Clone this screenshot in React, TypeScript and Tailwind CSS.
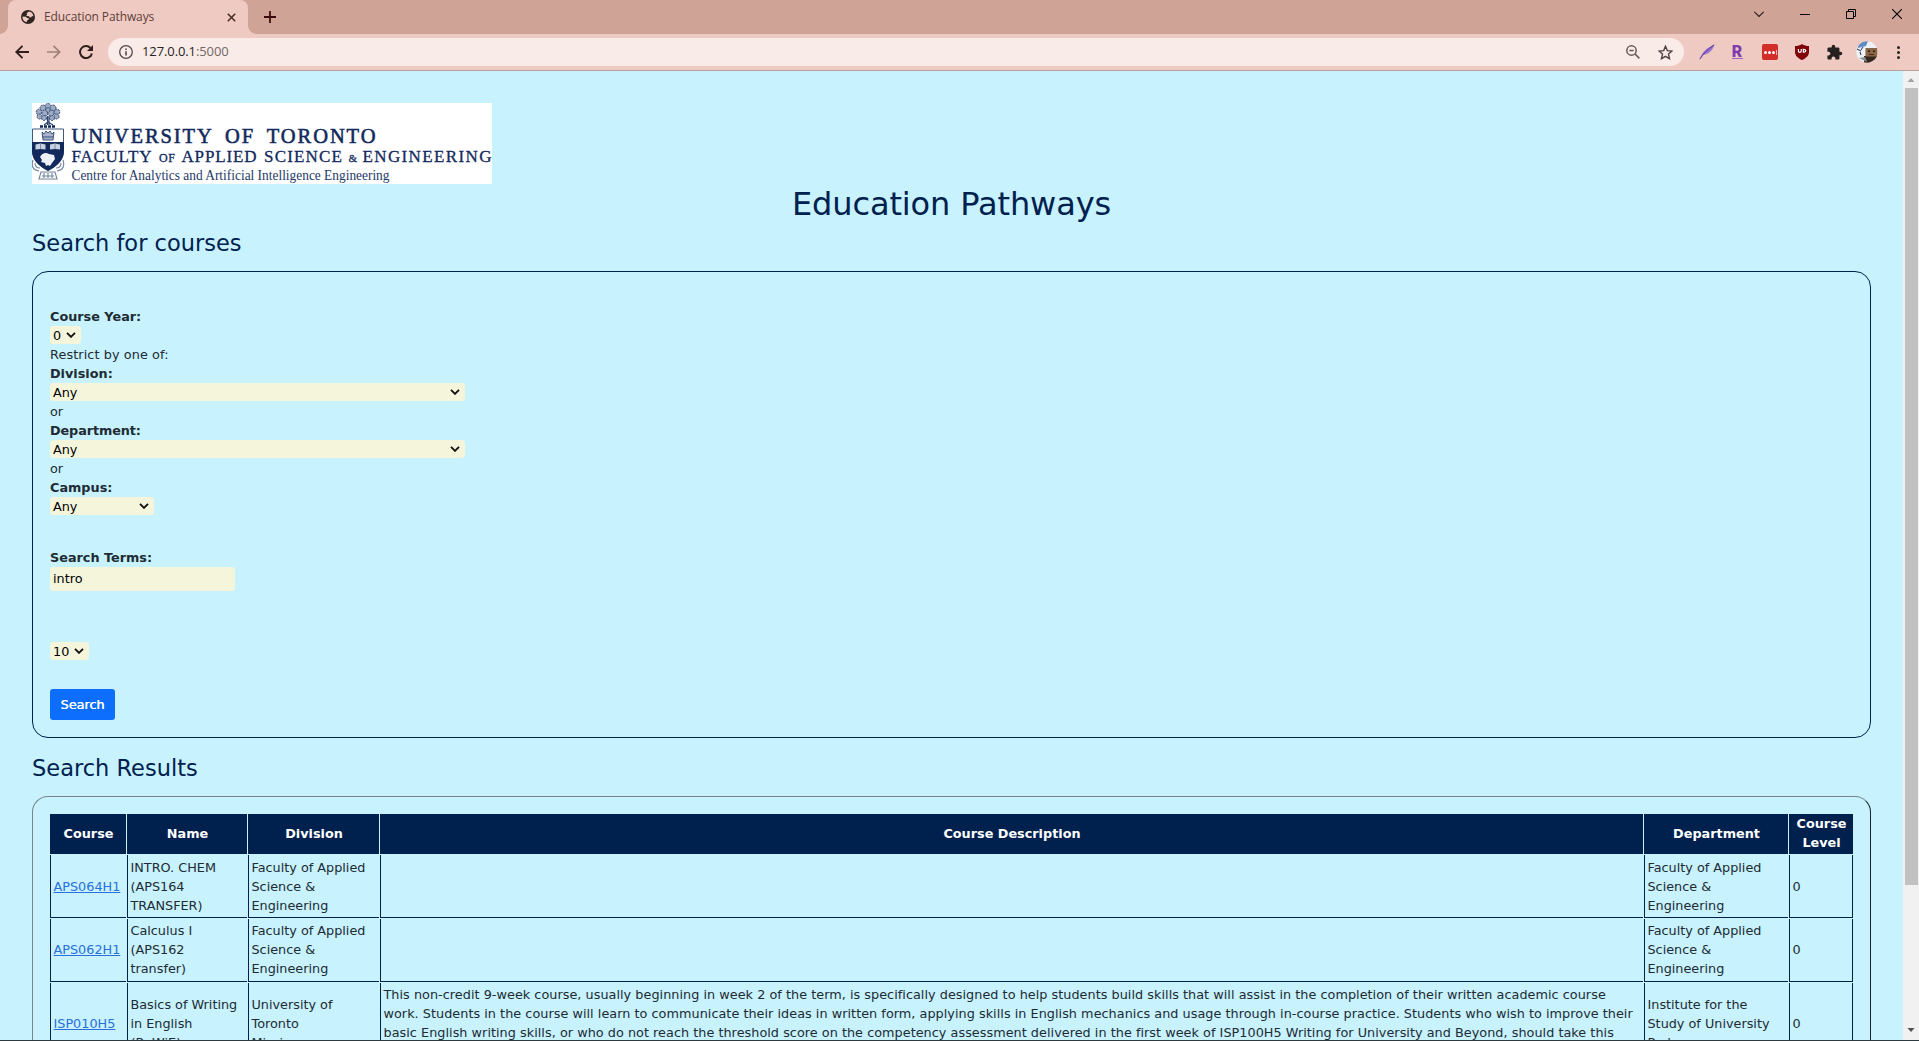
import React from "react";
import { MdExtension } from "react-icons/md";

function TabStrip() {
  return (
    <div className="flex h-[34px] bg-[#cfa497] pl-2">
      <div className="relative flex h-[34px] w-[240px] items-center rounded-t-lg bg-[#efcac2] pl-[13px] pr-[12px]">
        <span className="absolute -left-2 bottom-0 h-2 w-2 bg-[radial-gradient(circle_at_0_0,#cfa497_7.5px,#efcac2_8px)]" />
        <span className="absolute -right-2 bottom-0 h-2 w-2 bg-[radial-gradient(circle_at_100%_0,#cfa497_7.5px,#efcac2_8px)]" />
        <svg className="h-[14px] w-[14px]" viewBox="0 0 14 14">
          <circle cx="7" cy="7" r="7" fill="#2f2321" />
          <path d="M8 1.600 5.600 3.200l.5 1.500-1 1.300 3 .3.600 1.300 1.500-.3.900-1.200 1.300.3A5.600 5.600 0 0 0 8 1.600zM1.500 6.600l3.300.2 1.400 1.200 1.600.2-.3 1.600-1.500.7-.3 1.800A5.700 5.700 0 0 1 1.500 6.600z" fill="#efcac2" />
        </svg>
        <span className="ml-[9px] flex-1 whitespace-nowrap font-['Open_Sans','Noto_Sans',sans-serif] text-[12px] tracking-[-0.1px] text-[#5f4039]">Education Pathways</span>
        <svg className="h-[9px] w-[9px]" viewBox="0 0 9 9" stroke="#4a2f2a" strokeWidth="1.6">
          <path d="M.8.8l7.400 7.400M8.200.8.8 8.200" />
        </svg>
      </div>
      <svg className="ml-4 mt-[11px] h-3 w-3" viewBox="0 0 12 12" stroke="#3c0a0a" strokeWidth="1.8">
        <path d="M6 0v12M0 6h12" />
      </svg>
      <div className="ml-auto flex items-start pr-[17px] pt-[9px]">
        <svg className="mr-[36px] mt-[2px] h-[7px] w-[10px]" viewBox="0 0 10 7" fill="none" stroke="#2b1a17" strokeWidth="1.100">
          <path d="M.3.8 5 5.500 9.700.8" />
        </svg>
        <svg className="mr-[36px] h-[10px] w-[10px]" viewBox="0 0 10 10" stroke="#000">
          <path d="M0 5.500h10" />
        </svg>
        <svg className="mr-[36px] h-[10px] w-[10px]" viewBox="0 0 10 10" fill="none" stroke="#000">
          <path d="M.5 2.500h7v7h-7zM2.500 2.500v-2h7v7h-2" />
        </svg>
        <svg className="h-[10px] w-[10px]" viewBox="0 0 10 10" stroke="#000" strokeWidth="1.100">
          <path d="M0 0l10 10M10 0 0 10" />
        </svg>
      </div>
    </div>
  );
}

function Toolbar() {
  return (
    <div className="flex h-[37px] items-center border-b border-[#b9a19d] bg-[#efcac2] pl-[15px] pr-[16px]">
      <svg className="h-[14px] w-[14px]" viewBox="0 0 14 14" fill="none" stroke="#2f1f1c" strokeWidth="1.900">
        <path d="M14 7H1.500M7.500.8 1.300 7l6.200 6.200" />
      </svg>
      <svg className="ml-[18px] h-[14px] w-[14px]" viewBox="0 0 14 14" fill="none" stroke="#a17f79" strokeWidth="1.700">
        <path d="M0 7h12.500M6.500.8 12.700 7l-6.200 6.200" />
      </svg>
      <svg className="ml-[18px] h-[14px] w-[14px]" viewBox="0 0 14 14" fill="none">
        <path d="M12.900 8.500A6 6 0 1 1 11.500 3" stroke="#2f1f1c" strokeWidth="2" />
        <path d="M14 0v6H8z" fill="#2f1f1c" />
      </svg>
      <div className="ml-[15px] flex h-7 w-[1576px] items-center rounded-full bg-[#f9ebe8] pl-[11px] pr-[11px]">
        <svg className="h-[14px] w-[14px]" viewBox="0 0 14 14" fill="none" stroke="#57494a" strokeWidth="1.300">
          <circle cx="7" cy="7" r="6.300" />
          <path d="M7 6.200v4.300M7 3.400v1.500" strokeWidth="1.600" />
        </svg>
        <span className="ml-[9px] flex-1 font-['Open_Sans','Noto_Sans',sans-serif] text-[13px] tracking-[-0.100px] text-[#2a2222]">
          127.0.0.1<span className="text-[#756765]">:5000</span>
        </span>
        <svg className="h-[14px] w-[14px]" viewBox="0 0 14 14" fill="none" stroke="#6a5b58" strokeWidth="1.500">
          <circle cx="5.500" cy="5.500" r="4.700" />
          <path d="M8.900 8.900l4.500 4.500M3.300 5.500h4.400" />
        </svg>
        <svg className="ml-[18px] h-[15px] w-[15px]" viewBox="0 0 15 15" fill="none" stroke="#4e4240" strokeWidth="1.400">
          <path d="M7.500 1.200 9.300 5.600l4.700.4-3.500 3.100 1 4.600-4-2.400-4 2.400 1-4.600L1 6l4.700-.4z" />
        </svg>
      </div>
      <svg className="ml-[15px] h-4 w-4" viewBox="0 0 16 16">
        <path d="M.8 15C3 8 8 3.500 15.500.8 13.500 6.500 10 10.300 4 11z" fill="#9a75cf" />
        <path d="M.8 15.200C4 10 9 5 15.200.8" stroke="#5b3295" fill="none" />
      </svg>
      <div className="ml-[14px] flex h-[18px] w-[16px] flex-col items-center justify-center font-['Roboto','Open_Sans',sans-serif] text-[16px] font-black leading-[13px] text-[#7e3bb0]">
        <span>R</span>
        <span className="h-[1px] w-[11px] bg-[#9a68c5]" />
      </div>
      <div className="ml-[17px] flex h-4 w-4 items-center justify-center gap-[1px] rounded-[2px] bg-[#d32d2a]">
        <i className="h-[3px] w-[3px] rounded-full bg-white" />
        <i className="h-[3px] w-[3px] rounded-full bg-white" />
        <i className="h-[3px] w-[3px] rounded-full bg-white" />
        <i className="h-[5px] w-[1px] bg-[#f3b5b3]" />
      </div>
      <svg className="ml-[17px] h-4 w-[14px]" viewBox="0 0 14 16">
        <path d="M7 0c2 1.500 4.500 2 7 2v6c0 4-3.500 6.500-7 8-3.500-1.500-7-4-7-8V2c2.500 0 5-.5 7-2z" fill="#800309" />
        <path d="M3.400 5v2a1.400 1.400 0 0 0 2.800 0V5M8.300 5.300v2.900c3.300.3 3.300-3.200 0-2.900z" fill="none" stroke="#fff" strokeWidth="1.200" />
      </svg>
      <MdExtension className="ml-[17px] h-[17px] w-[17px] text-[#262120]" />
      <svg className="ml-[13px] h-[22px] w-[22px]" viewBox="0 0 22 22">
        <clipPath id="avatar"><circle cx="11" cy="11" r="10.700" /></clipPath>
        <g clipPath="url(#avatar)">
          <path d="M0 0h22v22H0z" fill="#eef1f6" />
          <path d="M2 0h10L10 5 2 7z" fill="#5f8cc5" />
          <path d="M1 8l4 2M5 9l2-3M4 11l1 3" stroke="#1d2c5c" fill="none" />
          <path d="M8 15h14v7H8z" fill="#35291f" />
          <path d="M3 17l6-1 2 5z" fill="#8c8f96" />
          <path d="M9.500 7h12v8.500h-12z" fill="#8a6545" />
          <path d="M12 9.500h2v1.500h-2zM17 9.500h2v1.500h-2zM13 13h5v.8h-5z" fill="#2b1d14" />
        </g>
      </svg>
      <div className="ml-auto flex w-[10px] flex-col items-center gap-[2px]">
        <i className="h-[3px] w-[3px] rounded-full bg-[#2c2422]" />
        <i className="h-[3px] w-[3px] rounded-full bg-[#2c2422]" />
        <i className="h-[3px] w-[3px] rounded-full bg-[#2c2422]" />
      </div>
    </div>
  );
}

function Logo() {
  return (
    <svg className="block h-[81px] w-[460px] bg-white" viewBox="0 0 460 81" fontFamily="'Liberation Serif', serif" fill="#12295c">
      <g stroke="#2b4473" fill="none" strokeWidth=".9">
        <g fill="#9eabc3" strokeDasharray="2 .8">
          <circle cx="16" cy="3.500" r="3" /><circle cx="11" cy="5" r="3" /><circle cx="21" cy="5" r="3" />
          <circle cx="7" cy="9" r="2.800" /><circle cx="25" cy="9" r="2.800" /><circle cx="7.500" cy="13.500" r="2.500" />
          <circle cx="24.500" cy="13.500" r="2.500" /><circle cx="13" cy="10" r="3" /><circle cx="19" cy="10" r="3" />
          <circle cx="16" cy="7" r="2.200" /><circle cx="12" cy="15" r="2.500" /><circle cx="20" cy="15" r="2.500" />
        </g>
        <path d="M15.500 13v9M17 13v9M12 22l4-3 5 3" strokeWidth="1.200" />
        <path d="M8 23.500h16" strokeWidth="2.500" stroke="#12295c" strokeDasharray="3 1" />
        <path d="M.5 26h31v22c0 9-7 15-15.500 19C7.500 63 .5 57 .5 48z" fill="#fff" />
        <path d="M10 29l2 2 2-3 2 2 2-2 2 3 2-2-1 8H11zM11 34h10" fill="#a9b4ca" />
      </g>
      <path d="M0 39h32v9c0 9-7 15.500-16 20C7 63.500 0 57 0 48z" />
      <g fill="#c9d1df">
        <path d="M3.500 41.500l5-1 5 1v5l-5-.5-5 .5zM18 41.500l5-1 5 1v5l-5-.5-5 .5z" />
        <path d="M8 54c2-4 6-5 9-3l5 1 1 4-3 4-2 3-2-1-2 1-1-3-4-1 1-2z" fill="#eef1f6" />
      </g>
      <path d="M8.500 41v5M23 41v5" stroke="#5e7196" strokeWidth=".7" />
      <path d="M1 57c-2 6 0 10 6 11M31 57c2 6 0 10-6 11M3 60c0 3 2 5 5 5M29 60c0 3-2 5-5 5M9 69h14l2 7H7zM10 73h12M12 70v5M16 70v5M20 70v5" fill="none" stroke="#70819f" strokeWidth="1.100" />
      <text x="39.500" y="39.500" fontSize="20.500" textLength="304" stroke="#12295c" strokeWidth=".55" wordSpacing="5">UNIVERSITY OF TORONTO</text>
      <g fontSize="17" stroke="#12295c" strokeWidth=".3">
        <text x="39.500" y="58.500" textLength="80">FACULTY</text>
        <text x="127" y="58.500" fontSize="12" textLength="16">OF</text>
        <text x="149.500" y="58.500" textLength="75">APPLIED</text>
        <text x="232" y="58.500" textLength="78">SCIENCE</text>
        <text x="316.500" y="58.500" fontSize="11">&amp;</text>
        <text x="330.500" y="58.500" textLength="129">ENGINEERING</text>
      </g>
      <text x="39.500" y="77" fontSize="14" textLength="318" lengthAdjust="spacingAndGlyphs" fill="#243a69">Centre for Analytics and Artificial Intelligence Engineering</text>
    </svg>
  );
}

function Select({ value, className }: { value: string; className: string }) {
  return (
    <div className="flex h-[19px] items-start">
      <div className={"flex h-[18px] items-center justify-between rounded-[3px] bg-[#f5f5dc] pl-[4px] pr-[5px] leading-[18px] text-black " + className}>
        <span className="-ml-px pt-px">{value}</span>
        <svg className="h-[6px] w-[10px]" viewBox="0 0 10 6" fill="none" stroke="#111" strokeWidth="1.900">
          <path d="M1 .8 5 4.800l4-4" />
        </svg>
      </div>
    </div>
  );
}

function SearchForm() {
  return (
    <div className="h-[467px] rounded-[16px] border border-[#00204e] px-[17px] pt-[35px]">
      <b className="block">Course Year:</b>
      <Select value="0" className="w-[31px]" />
      <p className="tracking-[0.1px]">Restrict by one of:</p>
      <b className="block">Division:</b>
      <Select value="Any" className="w-[415px]" />
      <p>or</p>
      <b className="block tracking-[-0.1px]">Department:</b>
      <Select value="Any" className="w-[415px]" />
      <p>or</p>
      <b className="block">Campus:</b>
      <Select value="Any" className="w-[104px]" />
      <b className="mt-[32px] block">Search Terms:</b>
      <div className="h-6 w-[185px] rounded-[3px] bg-[#f5f5dc] pl-[3px] leading-[23px] text-black">intro</div>
      <div className="mt-[51px]">
        <Select value="10" className="w-[39px]" />
      </div>
      <button className="mt-[28px] block h-[31px] w-[65px] rounded-[3px] bg-[#0d6efd] text-[12.800px] text-white [text-shadow:0.300px_0_0_#fff]">Search</button>
    </div>
  );
}

const headers = ["Course", "Name", "Division", "Course Description", "Department", "Course Level"];

const rows = [
  { h: "h-[63px]", pad: "", cells: [["APS064H1"], ["INTRO. CHEM", "(APS164", "TRANSFER)"], ["Faculty of Applied", "Science &", "Engineering"], [], ["Faculty of Applied", "Science &", "Engineering"], ["0"]] },
  { h: "h-[63px]", pad: "pb-[2px]", cells: [["APS062H1"], ["Calculus I", "(APS162", "transfer)"], ["Faculty of Applied", "Science &", "Engineering"], [], ["Faculty of Applied", "Science &", "Engineering"], ["0"]] },
  {
    h: "h-[82px]",
    pad: "",
    cells: [
      ["ISP010H5"],
      ["Basics of Writing", "in English", "(BaWiE)"],
      ["University of", "Toronto", "Mississauga"],
      [
        "This non-credit 9-week course, usually beginning in week 2 of the term, is specifically designed to help students build skills that will assist in the completion of their written academic course",
        "work. Students in the course will learn to communicate their ideas in written form, applying skills in English mechanics and usage through in-course practice. Students who wish to improve their",
        "basic English writing skills, or who do not reach the threshold score on the competency assessment delivered in the first week of ISP100H5 Writing for University and Beyond, should take this",
        "course.",
      ],
      ["Institute for the", "Study of University", "Pedagogy"],
      ["0"],
    ],
  },
];

const columns = "grid grid-cols-[76px_120px_131px_1263px_144px_64px] gap-x-px";

function Results() {
  return (
    <div className="h-[400px] rounded-[16px] border border-l-[#76848f] border-t-[#76848f] border-r-[#14252d] border-b-[#14252d] px-[17px] pt-[17px]">
      <div className={columns + " h-10"}>
        {headers.map((h) => (
          <div key={h} className="flex items-center justify-center bg-[#00204e] pb-[2px] pl-[9px] pr-2 text-center font-bold text-white">{h}</div>
        ))}
      </div>
      {rows.map((r, i) => (
        <div key={i} className={columns + " mt-px " + r.h}>
          {r.cells.map((lines, c) => (
            <div
              key={c}
              className={
                "flex flex-col justify-center whitespace-nowrap border-b border-l border-[#00204e] pl-[2.500px] " +
                (c === 5 ? "border-r " : "") +
                (c === 3 ? "pb-[2px] tracking-[0.037px]" : r.pad)
              }
            >
              {lines.map((l, k) => (
                <span key={k} className={c === 0 ? "text-[#2a6fdb] underline" : ""}>{l}</span>
              ))}
            </div>
          ))}
        </div>
      ))}
    </div>
  );
}

function Scrollbar() {
  return (
    <div className="flex w-4 flex-col items-center bg-[#f1f1f1]">
      <svg className="h-[17px] w-4 shrink-0" viewBox="0 0 16 17"><path d="M4.500 11 8 7l3.500 4z" fill="#a3a3a3" /></svg>
      <div className="h-[797px] w-[13px] bg-[#c1c1c1]" />
      <svg className="mb-px mt-auto h-[17px] w-4 shrink-0" viewBox="0 0 16 17"><path d="M4.500 6 8 10l3.500-4z" fill="#505050" /></svg>
    </div>
  );
}

export default function App() {
  return (
    <div className="flex h-[1041px] w-[1919px] flex-col overflow-hidden border-b border-[#2d3a40] bg-[#c7f2fe]">
      <TabStrip />
      <Toolbar />
      <div className="flex min-h-0 flex-1">
        <main className="flex-1 overflow-hidden bg-[#c7f2fe] px-8 pt-8 font-['DejaVu_Sans',Verdana,sans-serif] text-[12.800px] leading-[19px] text-[#212b33]">
          <Logo />
          <h1 className="h-[38px] pt-px text-center text-[32px] leading-[38px] tracking-[-0.120px] text-[#00204e]">Education Pathways</h1>
          <h2 className="mt-[8px] h-[28px] text-[22.500px] leading-[26px] text-[#00204e]">Search for courses</h2>
          <div className="mt-[13px]"><SearchForm /></div>
          <h2 className="mt-[17px] h-[27px] text-[22.500px] leading-[27px] text-[#00204e]">Search Results</h2>
          <div className="mt-[14px]"><Results /></div>
        </main>
        <Scrollbar />
      </div>
    </div>
  );
}
